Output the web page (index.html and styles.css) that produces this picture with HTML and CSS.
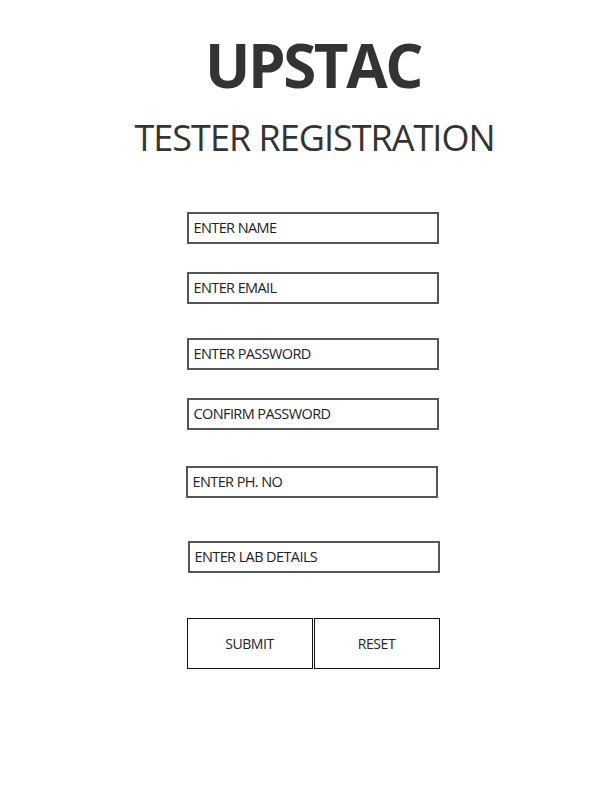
FILE: index.html
```html
<!DOCTYPE html>
<html>
<head>
<meta charset="utf-8">
<link rel="stylesheet" href="styles.css">
</head>
<body>
<main class="page">
  <h1 class="brand">UPSTAC</h1>
  <h2 class="subtitle">TESTER REGISTRATION</h2>
  <form class="form">
    <div class="field f-name">ENTER NAME</div>
    <div class="field f-email">ENTER EMAIL</div>
    <div class="field f-pass">ENTER PASSWORD</div>
    <div class="field f-confirm">CONFIRM PASSWORD</div>
    <div class="field f-phone">ENTER PH. NO</div>
    <div class="field f-lab">ENTER LAB DETAILS</div>
    <div class="actions">
      <div class="btn">SUBMIT</div>
      <div class="btn">RESET</div>
    </div>
  </form>
</main>
</body>
</html>
```
FILE: styles.css
```css
* { box-sizing: border-box; }
html, body { margin: 0; padding: 0; background: #fff; }
body {
  font-family: "Open Sans", "Noto Sans", sans-serif;
  color: #333;
}
.page {
  width: 612px;
  padding: 0 0 0 15px;
  display: flex;
  flex-direction: column;
  align-items: center;
}
.brand {
  margin: 24px 0 0 -1px;
  font-size: 60px;
  font-weight: 700;
  letter-spacing: -2.4px;
  line-height: 82px;
  color: #333;
}
.subtitle {
  margin: 7px 0 0 2px;
  font-size: 36px;
  font-weight: 400;
  letter-spacing: -1px;
  line-height: 50px;
  color: #333;
}
.form {
  width: 254px;
  display: flex;
  flex-direction: column;
  align-items: flex-start;
  margin-top: 49px;
}
.field {
  width: 252px;
  height: 32px;
  border: 2px solid #555;
  padding: 0 0 1px 5px;
  display: flex;
  align-items: center;
  font-size: 14.5px;
  letter-spacing: -0.6px;
  color: #222;
}
.f-email { margin-top: 28px; }
.f-pass { margin-top: 34px; }
.f-confirm { margin-top: 28px; }
.f-phone { margin-top: 36px; margin-left: -1px; }
.f-lab { margin-top: 43px; margin-left: 1px; }
.actions {
  display: flex;
  gap: 1px;
  margin-top: 45px;
}
.btn {
  width: 126px;
  height: 51px;
  border: 1.5px solid #111;
  display: flex;
  align-items: center;
  justify-content: center;
  font-size: 14px;
  letter-spacing: -0.4px;
  color: #222;
}
```
